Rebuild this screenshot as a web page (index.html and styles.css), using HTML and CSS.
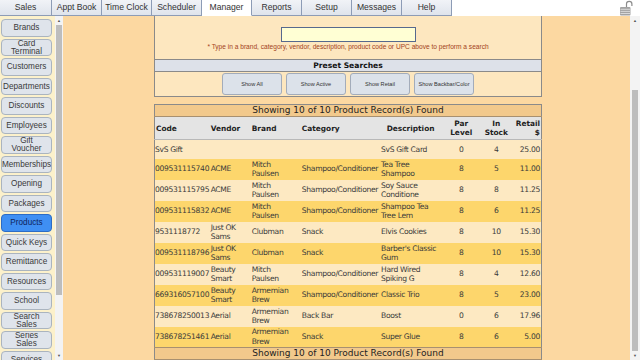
FILE: index.html
```html
<!DOCTYPE html>
<html lang="en">
<head>
  <meta charset="UTF-8">
  <title>Manager - Products</title>
  <link rel="stylesheet" href="styles.css">
</head>
<body>

  <div class="tabs">
    <div class="tab first">Sales</div>
    <div class="tab">Appt Book</div>
    <div class="tab">Time Clock</div>
    <div class="tab">Scheduler</div>
    <div class="tab active">Manager</div>
    <div class="tab">Reports</div>
    <div class="tab">Setup</div>
    <div class="tab">Messages</div>
    <div class="tab">Help</div>
    <div class="tab-fill">
      <svg class="lock" width="14" height="16" viewBox="0 0 14 16">
        <path d="M7.5 8 V4 a2.7 2.7 0 0 1 5.4 0 V6" fill="none" stroke="#8c8c8c" stroke-width="1.2"/>
        <rect x="1" y="7" width="10.5" height="8.5" rx="1" fill="#a3a3a3"/>
        <path d="M1.5 9.3 H11 M1.5 11.4 H11 M1.5 13.5 H11" stroke="#e6e6e6" stroke-width="0.8"/>
      </svg>
    </div>
  </div>

  <div class="main">
    <div class="side">
      <div class="side-list">
        <div class="side-btn">Brands</div>
        <div class="side-btn two">Card<br>Terminal</div>
        <div class="side-btn">Customers</div>
        <div class="side-btn">Departments</div>
        <div class="side-btn">Discounts</div>
        <div class="side-btn">Employees</div>
        <div class="side-btn two">Gift<br>Voucher</div>
        <div class="side-btn">Memberships</div>
        <div class="side-btn">Opening</div>
        <div class="side-btn">Packages</div>
        <div class="side-btn selected">Products</div>
        <div class="side-btn">Quick Keys</div>
        <div class="side-btn">Remittance</div>
        <div class="side-btn">Resources</div>
        <div class="side-btn">School</div>
        <div class="side-btn two">Search<br>Sales</div>
        <div class="side-btn two">Series<br>Sales</div>
        <div class="side-btn">Services</div>
      </div>
      <div class="vscroll side-scroll">
        <div class="arrow">&#9650;</div>
        <div class="thumb"></div>
        <div class="track"></div>
        <div class="arrow">&#9660;</div>
      </div>
    </div>

    <div class="content">
      <div class="panel">
        <div class="search">
          <input type="text" class="search-input">
          <div class="hint">* Type in a brand, category, vendor, description, product code or UPC above to perform a search</div>
        </div>
        <div class="preset-head">Preset Searches</div>
        <div class="preset-btns">
          <button class="preset">Show All</button>
          <button class="preset">Show Active</button>
          <button class="preset">Show Retail</button>
          <button class="preset">Show Backbar/Color</button>
        </div>
      </div>

      <table class="products">
        <colgroup>
          <col style="width:55px">
          <col style="width:41px">
          <col style="width:50px">
          <col style="width:79px">
          <col style="width:61px">
          <col style="width:40px">
          <col style="width:30px">
          <col style="width:30px">
        </colgroup>
        <thead>
          <tr class="title"><td colspan="8">Showing 10 of 10 Product Record(s) Found</td></tr>
          <tr class="heads">
            <th>Code</th>
            <th>Vendor</th>
            <th>Brand</th>
            <th>Category</th>
            <th class="c">Description</th>
            <th class="c">Par<br>Level</th>
            <th class="c">In<br>Stock</th>
            <th class="r">Retail<br>$</th>
          </tr>
        </thead>
        <tbody>
          <tr class="light short"><td>SvS Gift</td><td></td><td></td><td></td><td>SvS Gift Card</td><td class="c">0</td><td class="c">4</td><td class="r">25.00</td></tr>
          <tr class="dark"><td>009531115740</td><td>ACME</td><td>Mitch<br>Paulsen</td><td>Shampoo/Conditioner</td><td>Tea Tree<br>Shampoo</td><td class="c">8</td><td class="c">5</td><td class="r">11.00</td></tr>
          <tr class="light"><td>009531115795</td><td>ACME</td><td>Mitch<br>Paulsen</td><td>Shampoo/Conditioner</td><td>Soy Sauce<br>Conditione</td><td class="c">8</td><td class="c">8</td><td class="r">11.25</td></tr>
          <tr class="dark"><td>009531115832</td><td>ACME</td><td>Mitch<br>Paulsen</td><td>Shampoo/Conditioner</td><td>Shampoo Tea<br>Tree Lem</td><td class="c">8</td><td class="c">6</td><td class="r">11.25</td></tr>
          <tr class="light"><td>9531118772</td><td>Just OK<br>Sams</td><td>Clubman</td><td>Snack</td><td>Elvis Cookies</td><td class="c">8</td><td class="c">10</td><td class="r">15.30</td></tr>
          <tr class="dark"><td>009531118796</td><td>Just OK<br>Sams</td><td>Clubman</td><td>Snack</td><td>Barber's Classic<br>Gum</td><td class="c">8</td><td class="c">10</td><td class="r">15.30</td></tr>
          <tr class="light"><td>009531119007</td><td>Beauty<br>Smart</td><td>Mitch<br>Paulsen</td><td>Shampoo/Conditioner</td><td>Hard Wired<br>Spiking G</td><td class="c">8</td><td class="c">4</td><td class="r">12.60</td></tr>
          <tr class="dark"><td>669316057100</td><td>Beauty<br>Smart</td><td>Armemian<br>Brew</td><td>Shampoo/Conditioner</td><td>Classic Trio</td><td class="c">8</td><td class="c">5</td><td class="r">23.00</td></tr>
          <tr class="light"><td>738678250013</td><td>Aerial</td><td>Armemian<br>Brew</td><td>Back Bar</td><td>Boost</td><td class="c">0</td><td class="c">6</td><td class="r">17.96</td></tr>
          <tr class="dark"><td>738678251461</td><td>Aerial</td><td>Armemian<br>Brew</td><td>Snack</td><td>Super Glue</td><td class="c">8</td><td class="c">6</td><td class="r">5.00</td></tr>
        </tbody>
        <tfoot>
          <tr class="title"><td colspan="8">Showing 10 of 10 Product Record(s) Found</td></tr>
        </tfoot>
      </table>
    </div>

    <div class="vscroll page-scroll">
      <div class="arrow">&#9650;</div>
      <div class="gap"></div>
      <div class="thumb"></div>
      <div class="arrow">&#9660;</div>
    </div>
  </div>

</body>
</html>
```

FILE: styles.css
```css
body {
  margin: 0;
  width: 640px;
  height: 360px;
  overflow: hidden;
  font-family: "Liberation Sans", Arial, sans-serif;
  background: #ffffff;
}

/* top tab bar */
.tabs {
  display: flex;
  height: 16px;
  background: #ffffff;
}
.tab {
  box-sizing: border-box;
  width: 50px;
  height: 16px;
  border-right: 1px solid #8d9cb6;
  border-bottom: 1px solid #8d9cb6;
  background: linear-gradient(#f1f3f7, #dfe4ec);
  color: #333;
  font-size: 8.6px;
  text-align: center;
  line-height: 15px;
}
.tab.first {
  width: 52px;
}
.tab.active {
  background: #ffffff;
  border-bottom-color: #ffffff;
}
.tab-fill {
  flex: 1;
  display: flex;
  justify-content: flex-end;
  padding-right: 7px;
}
.lock {
  display: block;
}

.main {
  display: flex;
  height: 344px;
}

/* left menu */
.side {
  display: flex;
  width: 63px;
  background: #fcf1cb;
}
.side-list {
  width: 55px;
  padding: 3px 0 0 1px;
  display: flex;
  flex-direction: column;
  gap: 2px;
  overflow: hidden;
}
.side-btn {
  box-sizing: border-box;
  flex: none;
  width: 51px;
  height: 17.5px;
  border: 1px solid #aab4bf;
  border-radius: 4px;
  background: #dfe4eb;
  color: #3a3a3a;
  font-size: 8.2px;
  text-align: center;
  line-height: 15px;
  white-space: nowrap;
  overflow: hidden;
}
.side-btn.two {
  line-height: 7.8px;
  padding-top: 0.3px;
}
.side-btn.selected {
  background: #3f8ff3;
  border-color: #2d6cc4;
  color: #10245a;
}

/* fake scrollbars */
.vscroll {
  display: flex;
  flex-direction: column;
  align-items: center;
  background: #f3f3f3;
}
.vscroll .arrow {
  font-size: 4px;
  color: #555;
  height: 9px;
  line-height: 9px;
}
.vscroll .thumb {
  width: 6px;
  background: #bdbdbd;
}
.side-scroll {
  width: 8px;
}
.side-scroll .thumb {
  height: 270px;
}
.side-scroll .track {
  flex: 1;
}
.page-scroll {
  width: 10px;
}
.page-scroll .gap {
  height: 65px;
}
.page-scroll .thumb {
  flex: 1;
}

/* main area */
.content {
  flex: 1;
  background: #fcd8a1;
  padding-left: 91px;
  display: flex;
  flex-direction: column;
  align-items: flex-start;
  gap: 7px;
}
.panel {
  box-sizing: border-box;
  width: 388px;
  border: 1px solid #8a8a8a;
  border-top: none;
  background: #fde7bf;
}
.search {
  height: 43px;
  display: flex;
  flex-direction: column;
  align-items: center;
  padding-top: 11px;
  box-sizing: border-box;
}
.search-input {
  box-sizing: border-box;
  width: 135px;
  height: 15px;
  margin: 0;
  border: 1px solid #56698e;
  background: #ffffd4;
}
.hint {
  margin-top: 1px;
  font-size: 6.6px;
  color: #a3431c;
  white-space: nowrap;
}
.preset-head {
  height: 11px;
  border-top: 1px solid #8a8a8a;
  border-bottom: 1px solid #8a8a8a;
  background: #dde1e9;
  font-family: "DejaVu Sans", Verdana, sans-serif;
  font-weight: bold;
  font-size: 7.6px;
  line-height: 11px;
  text-align: center;
  color: #111;
}
.preset-btns {
  display: flex;
  justify-content: center;
  gap: 4px;
  padding: 1px 0;
  height: 22px;
}
.preset {
  width: 60px;
  height: 22px;
  margin: 0;
  padding: 0;
  border: 1px solid #a3acba;
  border-radius: 3px;
  background: #dce2ea;
  color: #333;
  font-family: "Liberation Sans", Arial, sans-serif;
  font-size: 5.6px;
}

/* product table */
.products {
  width: 388px;
  table-layout: fixed;
  border-collapse: collapse;
  border: 1px solid #8a8a8a;
  font-family: "DejaVu Sans", Verdana, sans-serif;
  font-size: 7.6px;
  letter-spacing: -0.32px;
  color: #3a3a3a;
}
.products td,
.products th {
  padding: 0 1px;
  white-space: nowrap;
  overflow: hidden;
  vertical-align: middle;
  line-height: 9.4px;
  text-align: left;
}
.products td:first-child {
  padding-left: 0;
}
.products .title td {
  height: 11px;
  padding: 0;
  background: #f2c98c;
  text-align: center;
  font-size: 9px;
  letter-spacing: 0;
  line-height: 11px;
  color: #222;
  border-bottom: 1px solid #a89070;
}
.products tfoot .title td {
  border-top: 1px solid #a89070;
}
.products .heads th {
  height: 22px;
  background: #e4e4e4;
  font-size: 7.4px;
  letter-spacing: 0;
  color: #222;
  border-bottom: 1px solid #b8b8b8;
  line-height: 9px;
}
.products tbody tr {
  height: 21px;
}
.products tbody tr.short {
  height: 19px;
}
.products tr.light td {
  background: #fde9c2;
}
.products tr.dark td {
  background: #fdd66c;
}
.products .c {
  text-align: center;
}
.products .r {
  text-align: right;
}
```
